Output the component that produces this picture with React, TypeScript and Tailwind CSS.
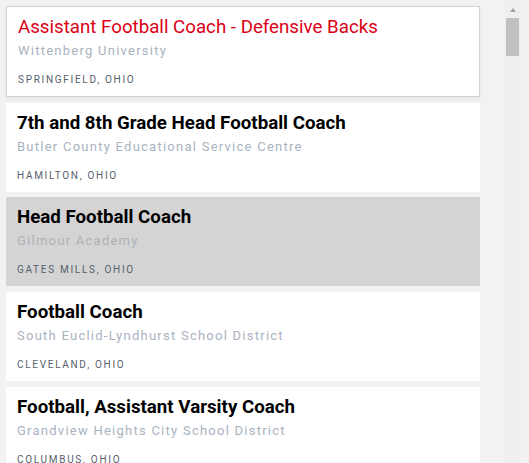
import React from "react";

type Job = { title: string; org: string; loc: string; variant?: "active" | "hover" };

const jobs: Job[] = [
  { title: "Assistant Football Coach - Defensive Backs", org: "Wittenberg University", loc: "Springfield, Ohio", variant: "active" },
  { title: "7th and 8th Grade Head Football Coach", org: "Butler County Educational Service Centre", loc: "Hamilton, Ohio" },
  { title: "Head Football Coach", org: "Gilmour Academy", loc: "Gates Mills, Ohio", variant: "hover" },
  { title: "Football Coach", org: "South Euclid-Lyndhurst School District", loc: "Cleveland, Ohio" },
  { title: "Football, Assistant Varsity Coach", org: "Grandview Heights City School District", loc: "Columbus, Ohio" },
];

function Card({ job }: { job: Job }) {
  const active = job.variant === "active";
  const hover = job.variant === "hover";
  return (
    <div
      className={
        "shrink-0 px-[11px] pt-[8px] pb-[9px] " +
        (active
          ? "bg-white border border-[#cdd3db] shadow-[0_2px_4px_rgba(0,0,0,0.05)]"
          : hover
          ? "bg-[#d4d4d4]"
          : "bg-white")
      }
    >
      <div
        className={
          "text-[18.72px] leading-[24px] whitespace-nowrap " +
          (active ? "text-[#db0016] font-normal" : "text-black font-bold")
        }
      >
        {job.title}
      </div>
      <div
        className={
          "mt-[3px] text-[13px] leading-[18px] tracking-[1.25px] whitespace-nowrap " +
          (hover ? "text-[#adb2b9]" : "text-[#a9b3c1]")
        }
      >
        {job.org}
      </div>
      <div className="mt-[13px] text-[10px] leading-[14px] tracking-[1.7px] uppercase text-[#56606d] whitespace-nowrap">
        {job.loc}
      </div>
    </div>
  );
}

export default function App() {
  return (
    <div
      className="h-[463px] w-[529px] overflow-hidden bg-[#f2f2f2] flex"
      style={{ fontFamily: "Roboto, 'Noto Sans', sans-serif" }}
    >
      <div className="w-[505px] pl-[6px] pr-[25px] pt-[6px] flex flex-col gap-[5.67px]">
        {jobs.map((j) => (
          <Card key={j.title} job={j} />
        ))}
      </div>
      <div className="w-[16px] h-full bg-[#efefef] flex flex-col items-center">
        <div className="mt-[8px] w-0 h-0 border-l-[3.5px] border-r-[3.5px] border-b-[4px] border-l-transparent border-r-transparent border-b-[#a3a3a3]" />
        <div className="mt-[6px] ml-[-1px] w-[13px] h-[38px] bg-[#c1c1c1]" />
      </div>
    </div>
  );
}
